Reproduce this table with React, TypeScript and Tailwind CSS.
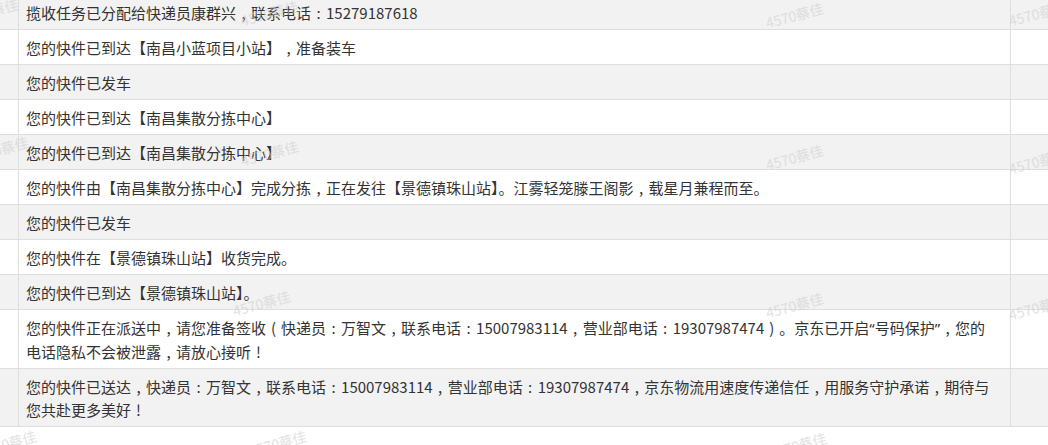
const rows: string[] = [
  "揽收任务已分配给快递员康群兴，联系电话：15279187618",
  "您的快件已到达【南昌小蓝项目小站】，准备装车",
  "您的快件已发车",
  "您的快件已到达【南昌集散分拣中心】",
  "您的快件已到达【南昌集散分拣中心】",
  "您的快件由【南昌集散分拣中心】完成分拣，正在发往【景德镇珠山站】。江雾轻笼滕王阁影，载星月兼程而至。",
  "您的快件已发车",
  "您的快件在【景德镇珠山站】收货完成。",
  "您的快件已到达【景德镇珠山站】。",
  "您的快件正在派送中，请您准备签收（快递员：万智文，联系电话：15007983114，营业部电话：19307987474）。京东已开启“号码保护”，您的电话隐私不会被泄露，请放心接听！",
  "您的快件已送达，快递员：万智文，联系电话：15007983114，营业部电话：19307987474，京东物流用速度传递信任，用服务守护承诺，期待与您共赴更多美好！",
];

const marks = [
  { x: -40, y: 0 },
  { x: 240, y: 2 },
  { x: 765, y: 4 },
  { x: 1008, y: 2 },
  { x: -30, y: 138 },
  { x: 240, y: 142 },
  { x: 765, y: 146 },
  { x: 1008, y: 150 },
  { x: 232, y: 292 },
  { x: 765, y: 294 },
  { x: 1008, y: 296 },
  { x: -22, y: 432 },
  { x: 248, y: 432 },
  { x: 768, y: 434 },
];

// full-width punctuation drawn centred in its cell, as the original font does
const centred: Record<string, string> = {
  "，": ",",
  "：": ":",
  "（": "(",
  "）": ")",
  "！": "!",
};

function Line({ text }: { text: string }) {
  const parts = text.split(/([，：（）！“”])/);
  return (
    <>
      {parts.map((p, i) => {
        if (centred[p])
          return (
            <span key={i} className="inline-block w-[1em] text-center">
              {centred[p]}
            </span>
          );
        if (p === "“" || p === "”")
          return (
            <span key={i} className="font-['Noto_Sans',sans-serif]">
              {p}
            </span>
          );
        return <span key={i}>{p}</span>;
      })}
    </>
  );
}

export default function App() {
  return (
    <div className="relative h-[445px] w-[1048px] overflow-hidden bg-white font-['Noto_Sans_CJK_SC','Noto_Sans',sans-serif] text-[15px] leading-[23px] text-[#333]">
      <div className="-mt-[5px] flex flex-col">
        {rows.map((text, i) => (
          <div
            key={i}
            className={`flex border-b border-[#dedede] ${i % 2 === 0 ? "bg-[#f2f2f2]" : "bg-white"}`}
          >
            <div className="w-[19px] shrink-0 border-r border-[#dedede]" />
            <div className="min-w-0 flex-1 pb-[5px] pl-[7px] pr-[12px] pt-[6px]">
              <Line text={text} />
            </div>
            <div className="w-[38px] shrink-0 border-l border-[#dedede]" />
          </div>
        ))}
      </div>

      <div className="pointer-events-none absolute inset-0">
        {marks.map((m, i) => (
          <span
            key={i}
            className="absolute -rotate-[15deg] whitespace-nowrap text-[14px] text-[#d0d0d0] opacity-60"
            style={{ left: m.x, top: m.y }}
          >
            4570蔡佳
          </span>
        ))}
      </div>
    </div>
  );
}
